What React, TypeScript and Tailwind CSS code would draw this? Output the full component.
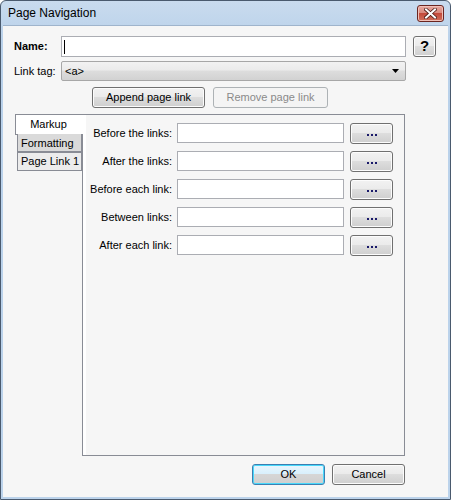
import React from "react";

const font = "font-['Liberation_Sans','Arial',sans-serif]";
const btn =
  "rounded-[3px] border border-[#707070] bg-[linear-gradient(#f2f2f2_0%,#ebebeb_45%,#dddddd_50%,#cfcfcf_100%)] shadow-[inset_0_0_0_1px_#fcfcfc] text-[11px] text-black flex items-center justify-center";

const rows = [
  "Before the links:",
  "After the links:",
  "Before each link:",
  "Between links:",
  "After each link:",
];

function CloseButton() {
  return (
    <div className="w-[27px] h-[17px] rounded-[3px] border border-[#6b2520] bg-[linear-gradient(#e8a89e_0%,#d98a7e_45%,#c44a3a_50%,#d0705c_100%)] flex items-center justify-center shadow-[inset_0_0_0_1px_#f0c0b8]">
      <svg width="13" height="11" viewBox="0 0 13 11">
        <path d="M2 1.5 L11 9.5 M11 1.5 L2 9.5" stroke="#4a1a14" strokeWidth="3.6" strokeLinecap="square" />
        <path d="M2 1.5 L11 9.5 M11 1.5 L2 9.5" stroke="#ffffff" strokeWidth="2" strokeLinecap="square" />
      </svg>
    </div>
  );
}

export default function App() {
  return (
    <div className={`w-[451px] h-[500px] ${font} text-[11px] text-black bg-white`}>
      <div className="w-full h-full border border-[#4a5a6e] rounded-t-[6px] bg-[linear-gradient(#c9dbee,#b9d1ea_40px,#bcd3eb)] flex flex-col">
        {/* Title bar */}
        <div className="h-[24px] flex items-center justify-between pl-[7px] pr-[6px]">
          <span className="text-[12px] text-black">Page Navigation</span>
          <CloseButton />
        </div>

        {/* Client area */}
        <div className="flex-1 mx-[2px] mb-[2px] border-t border-[#9fb4cc] bg-[#f6f6f6] pl-[11px] pt-[10px] flex flex-col">
          {/* Name */}
          <div className="flex items-center h-[21px]">
            <span className="w-[47px] font-bold">Name:</span>
            <div className="w-[345px] h-[21px] border border-[#abadb3] bg-white flex items-center pl-[2px]">
              <div className="w-px h-[14px] bg-black" />
            </div>
            <div className={`${btn} ml-[7px] w-[23px] h-[21px] text-[15px] font-extrabold`}>?</div>
          </div>

          {/* Link tag */}
          <div className="flex items-center h-[20px] mt-[4px]">
            <span className="w-[47px]">Link tag:</span>
            <div className="w-[345px] h-[20px] rounded-[2px] border border-[#a7a7a7] bg-[linear-gradient(#f2f2f2_0%,#ebebeb_45%,#dddddd_50%,#d2d2d2_100%)] flex items-center justify-between pl-[3px] pr-[6px]">
              <span>&lt;a&gt;</span>
              <svg width="7" height="4" viewBox="0 0 7 4">
                <path d="M0 0 H7 L3.5 4 Z" fill="#000" />
              </svg>
            </div>
          </div>

          {/* Append / Remove */}
          <div className="flex h-[21px] mt-[6px] pl-[78px] gap-[8px]">
            <div className={`${btn} w-[113px] h-[21px]`}>Append page link</div>
            <div className="w-[115px] h-[21px] rounded-[3px] border border-[#adb2b5] bg-[#f4f4f4] text-[#8a8a8a] flex items-center justify-center">
              Remove page link
            </div>
          </div>

          {/* Tabs + panel */}
          <div className="flex mt-[6px] ml-[1px] w-[390px] h-[342px]">
            <div className="w-[68px] flex flex-col relative z-10">
              <div className="h-[21px] w-[68px] bg-white border-t border-l border-b border-[#898c95] flex items-center justify-center pr-[2px]">
                Markup
              </div>
              <div className="ml-[2px] h-[18px] w-[65px] bg-[#dadada] border-l border-r border-b border-[#898c95] flex items-center pl-[3px] -mt-px pt-px">
                Formatting
              </div>
              <div className="ml-[2px] h-[19px] w-[65px] bg-[#ececec] border border-[#898c95] flex items-center pl-[3px]">
                Page Link 1
              </div>
            </div>
            <div className="-ml-px flex-1 border border-[#898c95] bg-[#f6f6f6] shadow-[inset_3px_0_0_#ffffff] pt-[8px] flex flex-col gap-[8px]">
              {rows.map((r) => (
                <div key={r} className="flex items-center h-[20px]">
                  <span className="w-[89px] text-right">{r}</span>
                  <div className="ml-[5px] w-[167px] h-[20px] border border-[#abadb3] bg-white" />
                  <div className={`${btn} ml-[6px] w-[43px] h-[21px]`}>
                    <div className="flex gap-[2px] mt-[3px]">
                      <span className="w-[2px] h-[2px] bg-[#1a1a6a]" />
                      <span className="w-[2px] h-[2px] bg-[#1a1a6a]" />
                      <span className="w-[2px] h-[2px] bg-[#1a1a6a]" />
                    </div>
                  </div>
                </div>
              ))}
            </div>
          </div>

          {/* OK / Cancel */}
          <div className="flex mt-[8px] pl-[238px] gap-[7px]">
            <div className="w-[73px] h-[21px] rounded-[3px] border border-[#3c7fb1] bg-[linear-gradient(#eaf6fd_0%,#d9f0fc_45%,#d6d6d6_50%,#cfcfcf_100%)] shadow-[inset_0_0_0_1px_#48d8fb] flex items-center justify-center">
              OK
            </div>
            <div className={`${btn} w-[73px] h-[21px]`}>Cancel</div>
          </div>
        </div>
      </div>
    </div>
  );
}
